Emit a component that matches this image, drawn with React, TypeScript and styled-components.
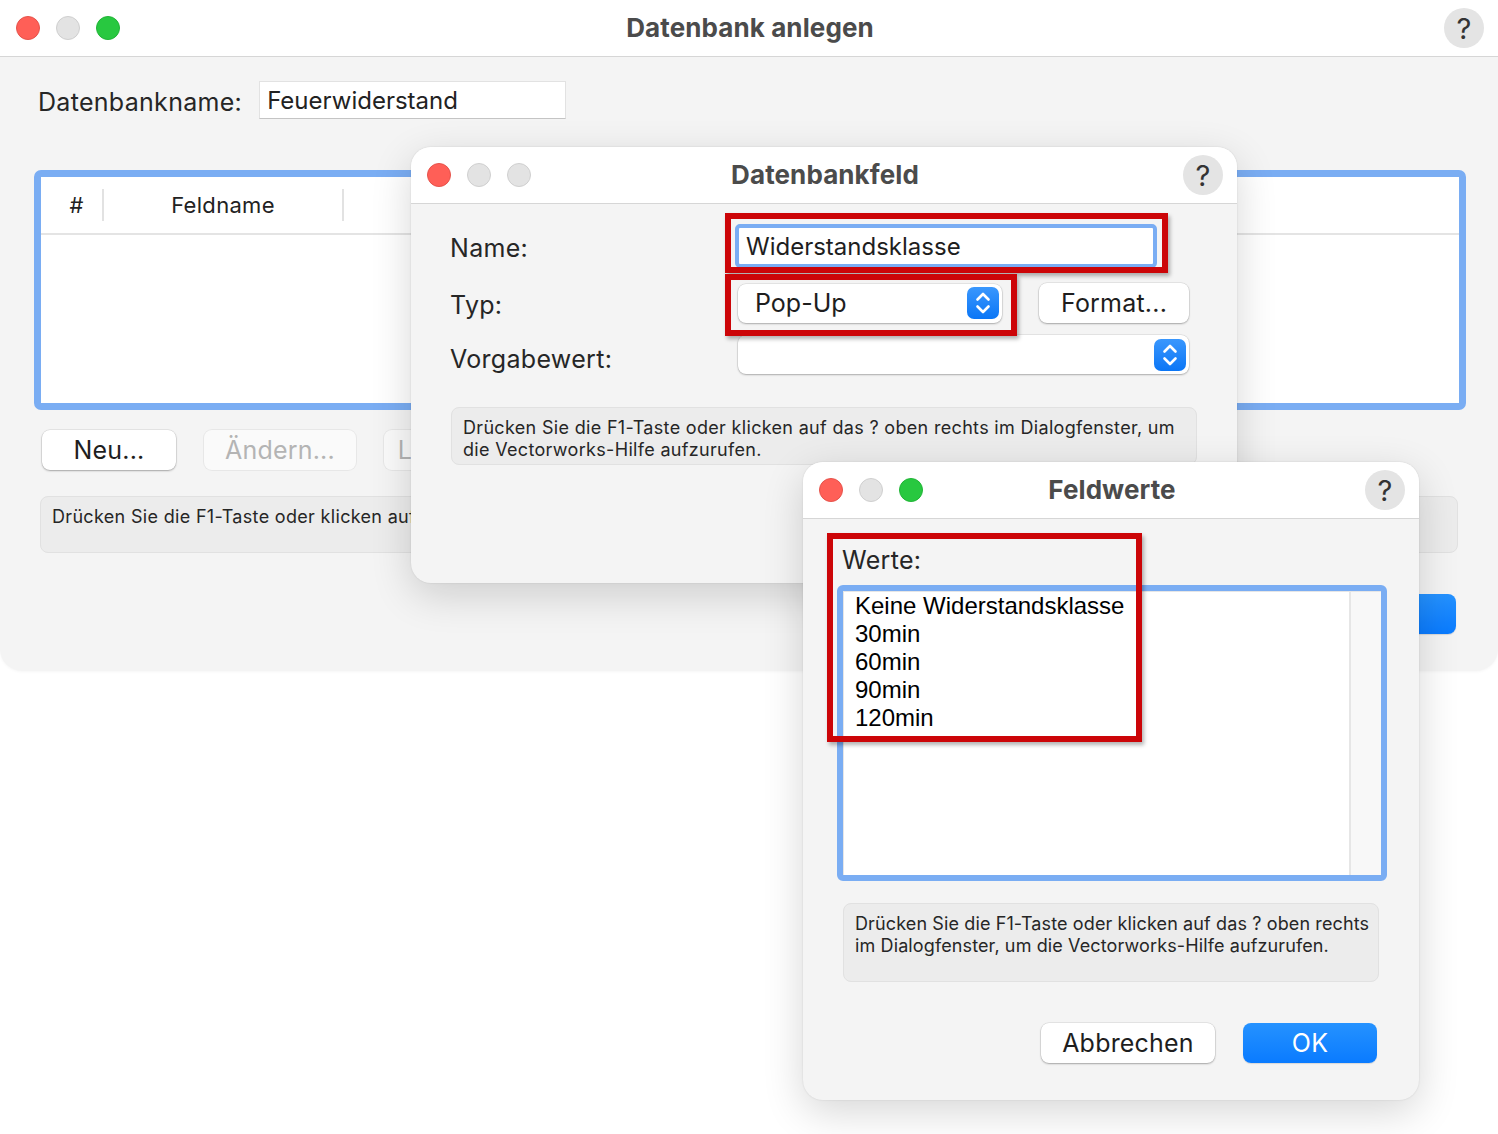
import React from "react";
import styled, { createGlobalStyle } from "styled-components";

const GlobalStyle = createGlobalStyle`
  html, body {
    margin: 0;
    padding: 0;
    background: #ffffff;
    font-family: Inter, "Open Sans", "Liberation Sans", sans-serif;
    color: #262626;
  }
`;

const Desktop = styled.div`
  position: relative;
  width: 1498px;
  height: 1134px;
  overflow: hidden;
  background: #ffffff;
`;

// Fenster liegen frei auf dem Desktop
const Fenster = styled.div<{ $x: number; $y: number; $w: number; $h: number; $hauptfenster?: boolean }>`
  position: absolute;
  left: ${(p) => p.$x}px;
  top: ${(p) => p.$y}px;
  width: ${(p) => p.$w}px;
  height: ${(p) => p.$h}px;
  display: flex;
  flex-direction: column;
  background: #f4f4f4;
  border-radius: ${(p) => (p.$hauptfenster ? "0 0 22px 22px" : "20px")};
  box-shadow: ${(p) =>
    p.$hauptfenster
      ? "0 1px 3px rgba(0,0,0,0.04)"
      : "0 12px 40px rgba(0,0,0,0.16), 0 0 2px rgba(0,0,0,0.12)"};
  overflow: hidden;
`;

const Titelleiste = styled.div`
  flex: 0 0 56px;
  display: grid;
  grid-template-columns: 1fr auto 1fr;
  align-items: center;
  padding: 0 14px 0 16px;
  background: #ffffff;
  border-bottom: 1px solid #d6d6d6;
`;

const Ampel = styled.div`
  display: flex;
  gap: 16px;
`;

const Knopf = styled.span<{ $farbe: "rot" | "grau" | "gruen" }>`
  width: 24px;
  height: 24px;
  border-radius: 50%;
  box-sizing: border-box;
  background: ${(p) => (p.$farbe === "rot" ? "#ff5f57" : p.$farbe === "gruen" ? "#28c840" : "#e3e3e3")};
  border: 1px solid ${(p) => (p.$farbe === "rot" ? "#e5534b" : p.$farbe === "gruen" ? "#20b436" : "#cfcfcf")};
`;

const Titel = styled.h1`
  margin: 0 0 1px;
  font-size: 26px;
  font-weight: 700;
  color: #4b4b4b;
  letter-spacing: 0.1px;
`;

const Hilfeknopf = styled.div`
  justify-self: end;
  width: 40px;
  height: 40px;
  border-radius: 50%;
  background: #e4e4e4;
  display: flex;
  align-items: center;
  justify-content: center;
  font-size: 29px;
  color: #333;
`;

const Inhalt = styled.div<{ $pad: string }>`
  position: relative;
  flex: 1;
  display: flex;
  flex-direction: column;
  padding: ${(p) => p.$pad};
`;

const Zeile = styled.div<{ $gap?: number; $mt?: number; $ml?: number }>`
  display: flex;
  align-items: center;
  gap: ${(p) => p.$gap ?? 0}px;
  margin-top: ${(p) => p.$mt ?? 0}px;
  margin-left: ${(p) => p.$ml ?? 0}px;
`;

const Beschriftung = styled.span<{ $mt?: number }>`
  font-size: 25px;
  letter-spacing: 0.3px;
  line-height: 30px;
  margin-top: ${(p) => p.$mt ?? 0}px;
  padding-top: 3px;
  color: #262626;
  white-space: nowrap;
`;

const Textfeld = styled.div<{ $w: number }>`
  box-sizing: border-box;
  width: ${(p) => p.$w}px;
  height: 38px;
  background: #fff;
  border: 1px solid #e2e2e2;
  border-bottom-color: #c4c4c4;
  padding: 0 7px;
  display: flex;
  align-items: center;
  font-size: 24px;
  color: #222;
`;

const Tabelle = styled.div`
  margin-top: 51px;
  height: 240px;
  box-sizing: border-box;
  border: 7px solid #7aadf3;
  border-radius: 7px;
  background: #fff;
  display: flex;
  flex-direction: column;
`;

const Kopfzeile = styled.div`
  height: 56px;
  display: flex;
  align-items: center;
  border-bottom: 2px solid #e4e4e4;
`;

const Spalte = styled.div<{ $w: number; $einzug?: number }>`
  box-sizing: border-box;
  width: ${(p) => p.$w}px;
  height: 32px;
  padding-left: ${(p) => p.$einzug ?? 0}px;
  display: flex;
  align-items: center;
  justify-content: center;
  border-right: 2px solid #e2e2e2;
  font-size: 22px;
  letter-spacing: 0.3px;
  color: #222;
`;

const Knopfleiste = styled.div<{ $mt: number; $ende?: boolean; $pl?: number; $pr?: number }>`
  display: flex;
  gap: 28px;
  margin-top: ${(p) => p.$mt}px;
  justify-content: ${(p) => (p.$ende ? "flex-end" : "flex-start")};
  padding-left: ${(p) => p.$pl ?? 0}px;
  padding-right: ${(p) => p.$pr ?? 0}px;
`;

const Schaltflaeche = styled.div<{ $w: number; $art?: "normal" | "inaktiv" | "standard" }>`
  box-sizing: border-box;
  width: ${(p) => p.$w}px;
  height: 40px;
  flex: 0 0 auto;
  border-radius: 8px;
  display: flex;
  align-items: center;
  justify-content: center;
  font-size: 25px;
  letter-spacing: 0.2px;
  color: ${(p) => (p.$art === "inaktiv" ? "#b4b4b4" : p.$art === "standard" ? "#fff" : "#1e1e1e")};
  background: ${(p) =>
    p.$art === "standard"
      ? "linear-gradient(#2592ff, #0a7bff)"
      : p.$art === "inaktiv"
      ? "#fafafa"
      : "#ffffff"};
  box-shadow: ${(p) =>
    p.$art === "inaktiv"
      ? "0 0 0 1px rgba(0,0,0,0.05)"
      : p.$art === "standard"
      ? "0 1px 1px rgba(0,0,0,0.12)"
      : "0 0 0 0.5px rgba(0,0,0,0.12), 0 1px 2px rgba(0,0,0,0.28)"};
`;

const Hinweis = styled.div<{ $mt: number; $h: number; $mx: string; $eng?: boolean }>`
  box-sizing: border-box;
  margin: ${(p) => p.$mt}px ${(p) => p.$mx};
  margin-bottom: 0;
  height: ${(p) => p.$h}px;
  background: #ececec;
  border: 1px solid #e1e1e1;
  border-radius: 8px;
  padding: 9px 0 0 11px;
  font-size: 18px;
  line-height: 22px;
  color: #262626;
  white-space: nowrap;
  overflow: hidden;
  letter-spacing: ${(p) => (p.$eng ? "0.12px" : "0.32px")};
`;

const Formular = styled.div`
  display: grid;
  grid-template-columns: 285px auto;
  align-items: center;
`;

const Fokusfeld = styled.div<{ $w: number }>`
  box-sizing: border-box;
  width: ${(p) => p.$w}px;
  height: 44px;
  border: 4px solid #7aadf3;
  border-radius: 5px;
  background: #fff;
  display: flex;
  align-items: center;
  padding-left: 7px;
  font-size: 24px;
  color: #1e1e1e;
`;

const Popup = styled.div<{ $w: number }>`
  box-sizing: border-box;
  width: ${(p) => p.$w}px;
  height: 39px;
  margin-left: 3px;
  background: #fff;
  border-radius: 8px;
  box-shadow: 0 0 0 0.5px rgba(0,0,0,0.12), 0 1px 2px rgba(0,0,0,0.25);
  display: flex;
  align-items: center;
  justify-content: space-between;
  padding: 0 3px 0 17px;
  font-size: 25px;
  color: #1e1e1e;
`;

const Stepper = styled.div`
  width: 32px;
  height: 32px;
  border-radius: 7px;
  background: linear-gradient(#3a97fd, #0b76f6);
  display: flex;
  align-items: center;
  justify-content: center;
`;

const Liste = styled.div`
  margin-top: 10px;
  height: 296px;
  box-sizing: border-box;
  border: 6px solid #7aadf3;
  border-radius: 6px;
  background: #fff;
  display: flex;
`;

const Eintraege = styled.div`
  flex: 1;
  padding: 0 0 0 11px;
  font-family: "Liberation Sans", Arial, sans-serif;
  font-size: 24px;
  line-height: 28px;
  color: #000;
  border-top: 1px solid #e6e6e6;
  border-left: 1px solid #e6e6e6;
`;

const Rollbalken = styled.div`
  width: 30px;
  background: #f8f8f8;
  border-left: 2px solid #e6e6e6;
  border-top: 1px solid #e6e6e6;
`;

// Rote Markierungen liegen über dem Dialog
const Markierung = styled.div<{ $x: number; $y: number; $w: number; $h: number }>`
  position: absolute;
  left: ${(p) => p.$x}px;
  top: ${(p) => p.$y}px;
  width: ${(p) => p.$w}px;
  height: ${(p) => p.$h}px;
  box-sizing: border-box;
  border: 6px solid #cc0508;
  box-shadow: 2px 3px 4px rgba(0,0,0,0.3);
  pointer-events: none;
`;

const Pfeile = () => (
  <Stepper>
    <svg width="20" height="26" viewBox="0 0 20 26" fill="none">
      <path d="M4.5 9.5 L10 4 L15.5 9.5" stroke="#fff" strokeWidth="2.6" strokeLinecap="round" strokeLinejoin="round" />
      <path d="M4.5 16.5 L10 22 L15.5 16.5" stroke="#fff" strokeWidth="2.6" strokeLinecap="round" strokeLinejoin="round" />
    </svg>
  </Stepper>
);

const TitelZeile = ({ titel, gruen }: { titel: string; gruen: boolean }) => (
  <Titelleiste>
    <Ampel>
      <Knopf $farbe="rot" />
      <Knopf $farbe="grau" />
      <Knopf $farbe={gruen ? "gruen" : "grau"} />
    </Ampel>
    <Titel>{titel}</Titel>
    <Hilfeknopf>?</Hilfeknopf>
  </Titelleiste>
);

export default function App() {
  return (
    <>
      <GlobalStyle />
      <Desktop>
        <Fenster $x={0} $y={0} $w={1498} $h={671} $hauptfenster>
          <TitelZeile titel="Datenbank anlegen" gruen />
          <Inhalt $pad="0 32px 0 34px">
            <Zeile $gap={17} $mt={24} $ml={4}>
              <Beschriftung>Datenbankname:</Beschriftung>
              <Textfeld $w={307}>Feuerwiderstand</Textfeld>
            </Zeile>
            <Tabelle>
              <Kopfzeile>
                <Spalte $w={63} $einzug={10}>#</Spalte>
                <Spalte $w={240}>Feldname</Spalte>
                <Spalte $w={300}>Feldtyp</Spalte>
              </Kopfzeile>
            </Tabelle>
            <Knopfleiste $mt={20} $pl={8}>
              <Schaltflaeche $w={134}>Neu...</Schaltflaeche>
              <Schaltflaeche $w={152} $art="inaktiv">Ändern...</Schaltflaeche>
              <Schaltflaeche $w={152} $art="inaktiv">Löschen...</Schaltflaeche>
            </Knopfleiste>
            <Hinweis $mt={26} $h={57} $mx="8px 0 6px">
              Drücken Sie die F1-Taste oder klicken auf das ? oben rechts im Dialogfenster, um die Vectorworks-Hilfe aufzurufen.
            </Hinweis>
            <Knopfleiste $mt={41} $ende $pr={10}>
              <Schaltflaeche $w={174}>Abbrechen</Schaltflaeche>
              <Schaltflaeche $w={134} $art="standard">OK</Schaltflaeche>
            </Knopfleiste>
          </Inhalt>
        </Fenster>

        <Fenster $x={411} $y={147} $w={826} $h={436}>
          <TitelZeile titel="Datenbankfeld" gruen={false} />
          <Inhalt $pad="20px 40px 0 39px">
            <Formular>
              <Beschriftung>Name:</Beschriftung>
              <Fokusfeld $w={422}>Widerstandsklasse</Fokusfeld>
              <Beschriftung $mt={15}>Typ:</Beschriftung>
              <Zeile $gap={37} $mt={15}>
                <Popup $w={264}>
                  Pop-Up
                  <Pfeile />
                </Popup>
                <Schaltflaeche $w={150}>Format...</Schaltflaeche>
              </Zeile>
              <Beschriftung $mt={18}>Vorgabewert:</Beschriftung>
              <Zeile $mt={12}>
                <Popup $w={451}>
                  <span />
                  <Pfeile />
                </Popup>
              </Zeile>
            </Formular>
            <Hinweis $mt={33} $h={58} $mx="0 0 1px">
              Drücken Sie die F1-Taste oder klicken auf das ? oben rechts im Dialogfenster, um
              <br />
              die Vectorworks-Hilfe aufzurufen.
            </Hinweis>
            <Markierung $x={314} $y={9} $w={443} $h={60} />
            <Markierung $x={314} $y={70} $w={292} $h={62} />
          </Inhalt>
        </Fenster>

        <Fenster $x={803} $y={462} $w={616} $h={638}>
          <TitelZeile titel="Feldwerte" gruen />
          <Inhalt $pad="23px 32px 0 34px">
            <Zeile $ml={5}>
              <Beschriftung>Werte:</Beschriftung>
            </Zeile>
            <Liste>
              <Eintraege>
                <div>Keine Widerstandsklasse</div>
                <div>30min</div>
                <div>60min</div>
                <div>90min</div>
                <div>120min</div>
              </Eintraege>
              <Rollbalken />
            </Liste>
            <Hinweis $mt={22} $h={79} $mx="8px 0 6px" $eng>
              Drücken Sie die F1-Taste oder klicken auf das ? oben rechts
              <br />
              im Dialogfenster, um die Vectorworks-Hilfe aufzurufen.
            </Hinweis>
            <Knopfleiste $mt={41} $ende $pr={10}>
              <Schaltflaeche $w={174}>Abbrechen</Schaltflaeche>
              <Schaltflaeche $w={134} $art="standard">OK</Schaltflaeche>
            </Knopfleiste>
            <Markierung $x={24} $y={14} $w={315} $h={209} />
          </Inhalt>
        </Fenster>
      </Desktop>
    </>
  );
}
